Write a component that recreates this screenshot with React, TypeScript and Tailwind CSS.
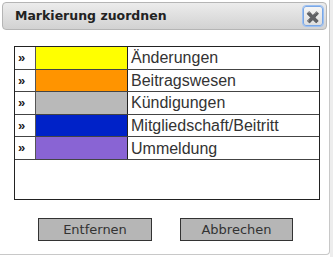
const rows = [
  { color: "bg-[#ffff00]", label: "Änderungen" },
  { color: "bg-[#ff9400]", label: "Beitragswesen" },
  { color: "bg-[#b9b9b9]", label: "Kündigungen" },
  { color: "bg-[#0022c8]", label: "Mitgliedschaft/Beitritt" },
  { color: "bg-[#8964d4]", label: "Ummeldung" },
];

export default function App() {
  return (
    <div className="w-[333px] h-[257px] bg-white flex overflow-hidden">
      <div className="w-[330px] h-[255px] bg-white border-r border-b border-[#c8c8c8] rounded-br flex flex-col p-[2px]">
        {/* title bar */}
        <div className="h-[28px] flex items-center justify-between pl-[12px] pr-[3px] rounded border border-[#b5b5b5] bg-gradient-to-b from-[#ececec] to-[#d2d2d2]">
          <span className="font-['DejaVu_Sans',sans-serif] font-bold text-[12.5px] text-[#222]">
            Markierung zuordnen
          </span>
          <button className="w-[20px] h-[20px] rounded-[3px] border border-[#7aa7e6] bg-gradient-to-b from-[#f6f6f6] to-[#dedede] flex items-center justify-center text-[11px] leading-none text-[#333] font-bold outline outline-1 outline-[#9cc0f2]">
            ✖
          </button>
        </div>

        {/* list */}
        <div className="mt-[16px] ml-[12px] w-[306px] h-[154px] border border-[#222] flex flex-col">
          {rows.map((r) => (
            <div key={r.label} className="flex h-[22.6px] border-b border-[#444] font-['Liberation_Sans',Arial,sans-serif]">
              <div className="w-[21px] border-r border-[#555] flex items-center pl-[3px] text-[13px] font-bold text-[#222]">»</div>
              <div className={`w-[92px] border-r border-[#222] ${r.color}`} />
              <div className="flex-1 flex items-center pl-[3px] pt-[1px] text-[16px] text-[#333]">{r.label}</div>
            </div>
          ))}
        </div>

        {/* buttons */}
        <div className="mt-[18px] flex pl-[36px] gap-[28px] font-['DejaVu_Sans',sans-serif]">
          <button className="w-[114px] h-[23px] bg-[#b6b6b6] border border-[#333] text-[13px] text-[#333]">Entfernen</button>
          <button className="w-[113px] h-[23px] bg-[#b6b6b6] border border-[#333] text-[13px] text-[#333]">Abbrechen</button>
        </div>
      </div>
      <div className="flex-1 bg-[#ededed]" />
    </div>
  );
}
